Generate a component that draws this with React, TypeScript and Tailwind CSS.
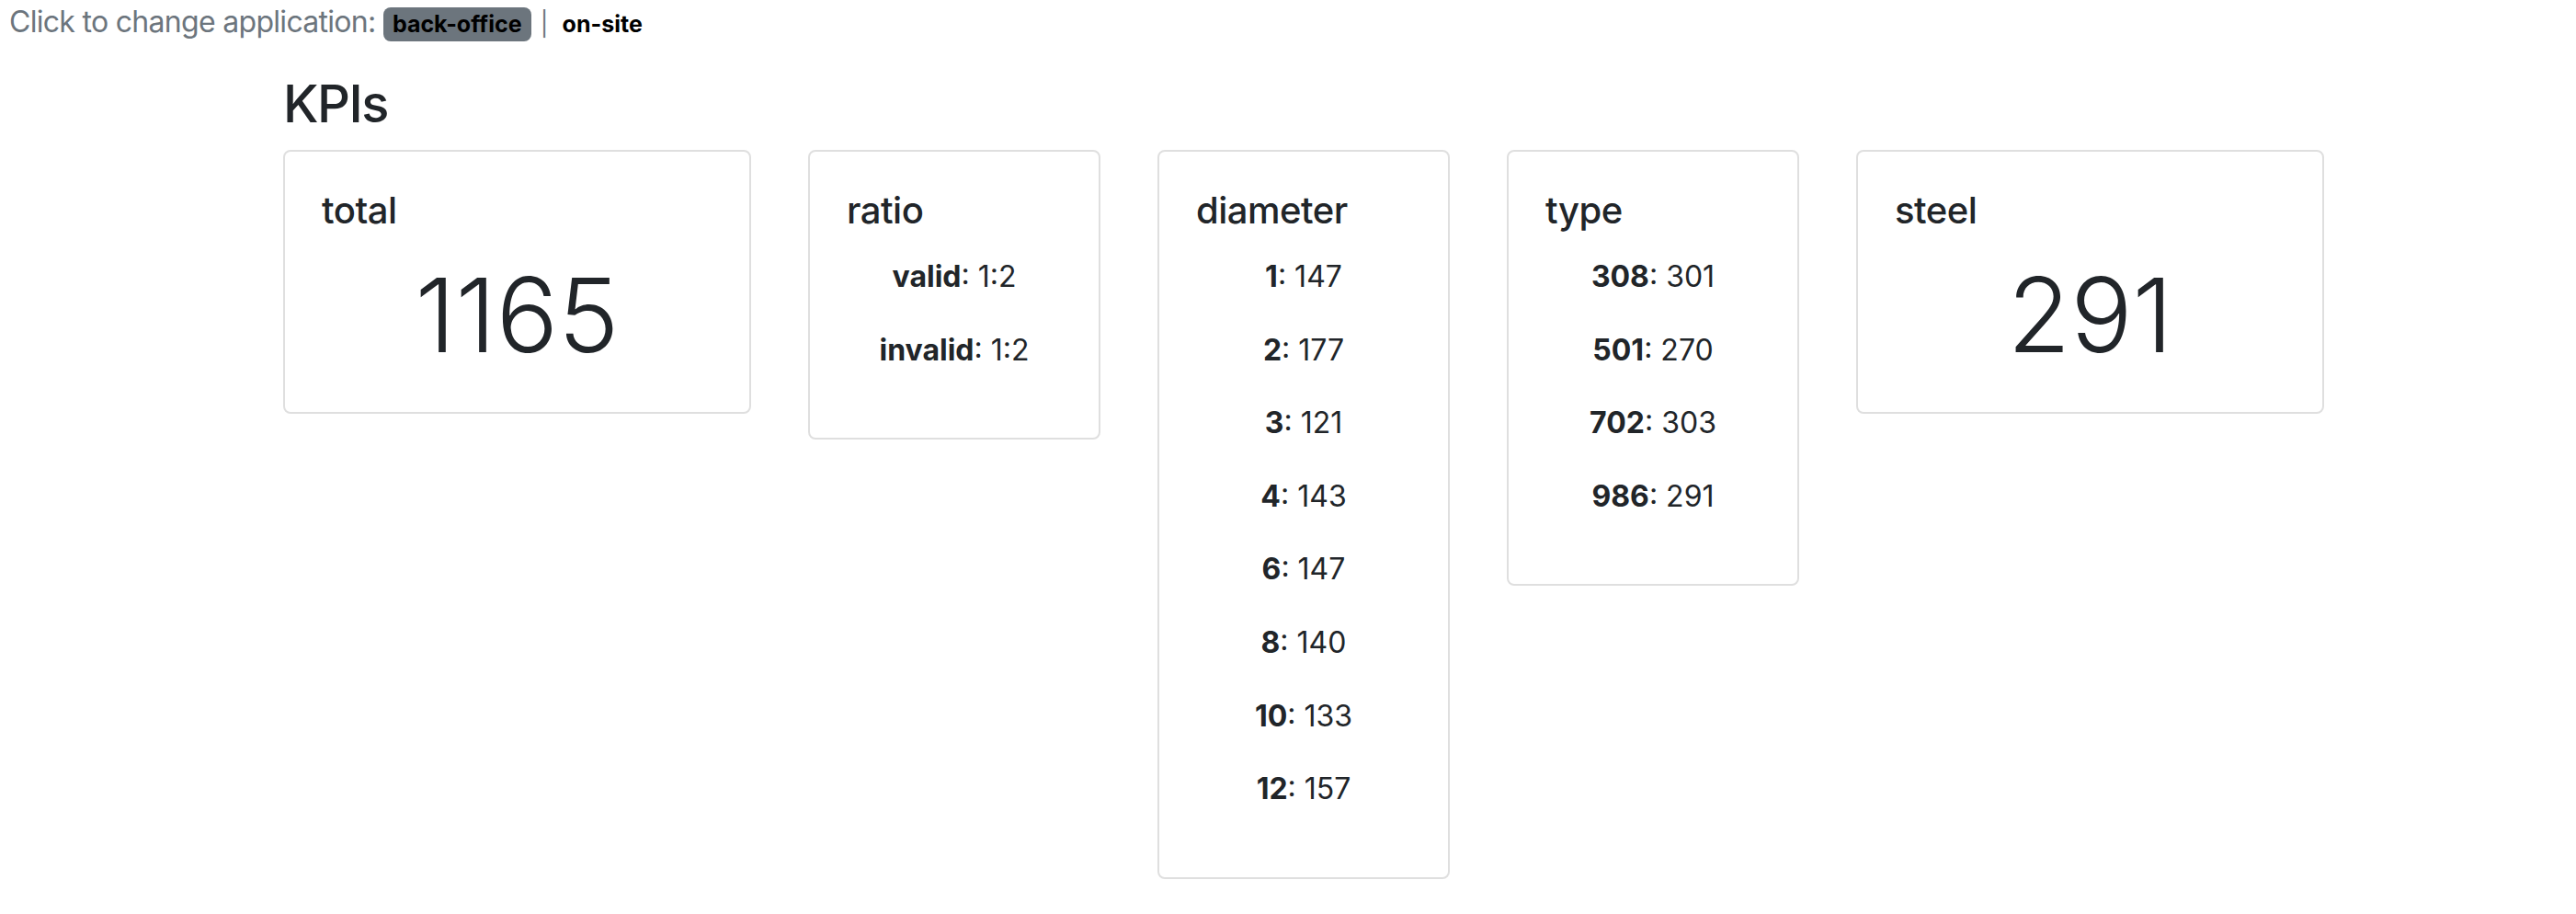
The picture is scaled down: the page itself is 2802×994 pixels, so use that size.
type Kpi = {
  title: string;
  width: string;
  value?: string;
  items?: [string, string][];
};

const kpis: Kpi[] = [
  { title: "total", width: "flex-1", value: "1165" },
  {
    title: "ratio",
    width: "w-[318px]",
    items: [
      ["valid", "1:2"],
      ["invalid", "1:2"],
    ],
  },
  {
    title: "diameter",
    width: "w-[318px]",
    items: [
      ["1", "147"],
      ["2", "177"],
      ["3", "121"],
      ["4", "143"],
      ["6", "147"],
      ["8", "140"],
      ["10", "133"],
      ["12", "157"],
    ],
  },
  {
    title: "type",
    width: "w-[318px]",
    items: [
      ["308", "301"],
      ["501", "270"],
      ["702", "303"],
      ["986", "291"],
    ],
  },
  { title: "steel", width: "flex-1", value: "291" },
];

const KpiCard = ({ kpi }: { kpi: Kpi }) => (
  <div className={`${kpi.width} border-2 border-[#dfdfdf] rounded-[8px] bg-white p-[40px]`}>
    <h5 className="text-[40px] font-medium leading-[48px] mb-[24px] tracking-[-0.5px]">{kpi.title}</h5>
    {kpi.value && (
      <div className="text-center text-[112px] font-light leading-[131px]">{kpi.value}</div>
    )}
    {kpi.items?.map(([key, val]) => (
      <p key={key} className="text-center text-[32px] leading-[47.6px] mb-[32px]">
        <strong className="font-bold">{key}</strong>: {val}
      </p>
    ))}
  </div>
);

export default function App() {
  return (
    <div className="min-h-screen bg-white text-[#212529] font-['Inter','Noto_Sans',sans-serif]">
      {/* application switcher */}
      <div className="pl-[10px] h-[48px] leading-[48px] text-[32px] text-[#6c757d] tracking-[-0.7px]">
        Click to change application:{" "}
        <span className="inline-block bg-[#6c757d] text-black font-bold text-[25px] leading-none tracking-normal px-[10px] py-[6px] rounded-[8px]">
          back-office
        </span>
        <span className="ml-[10px] mr-[16px] text-[26px] text-[#6c757d]">|</span>
        <span className="text-black font-bold text-[25px] tracking-normal">on-site</span>
      </div>

      <div className="ml-[308px] w-[2220px]">
        <h3 className="mt-[32px] mb-[16px] text-[56px] font-medium leading-[67px] tracking-[-1.5px]">KPIs</h3>
        <div className="flex items-start gap-[62px]">
          {kpis.map((kpi) => (
            <KpiCard key={kpi.title} kpi={kpi} />
          ))}
        </div>
      </div>
    </div>
  );
}
